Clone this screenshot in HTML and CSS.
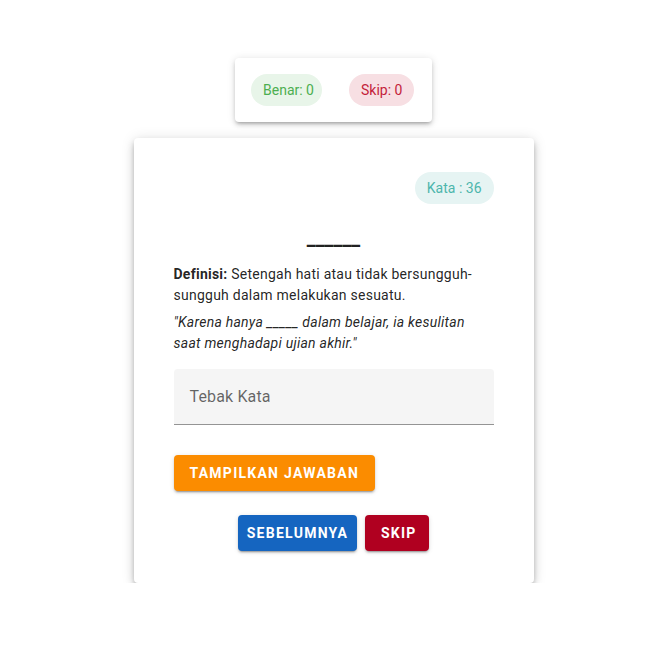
FILE: index.html
```html
<!DOCTYPE html>
<html>
<head>
<meta charset="utf-8">
<link rel="stylesheet" href="styles.css">
</head>
<body>
<div class="page">
  <div class="score-card">
    <span class="chip chip-green">Benar: 0</span>
    <span class="chip chip-red">Skip: 0</span>
  </div>
  <div class="main-card">
    <div class="chip-row">
      <span class="chip chip-teal">Kata : 36</span>
    </div>
    <div class="word">______</div>
    <p class="def"><b>Definisi:</b> Setengah hati atau tidak bersungguh-sungguh dalam melakukan sesuatu.</p>
    <p class="example">"Karena hanya _____ dalam belajar, ia kesulitan saat menghadapi ujian akhir."</p>
    <div class="field"><span class="label">Tebak Kata</span></div>
    <div class="reveal-row">
      <button class="btn btn-orange">Tampilkan Jawaban</button>
    </div>
    <div class="nav-row">
      <button class="btn btn-blue">Sebelumnya</button>
      <button class="btn btn-red">Skip</button>
    </div>
  </div>
</div>
</body>
</html>
```
FILE: styles.css
```css
* { box-sizing: border-box; }
body {
  margin: 0;
  background: #fff;
  font-family: Roboto, "Noto Sans", sans-serif;
  color: rgba(0,0,0,0.87);
}
.page {
  display: flex;
  flex-direction: column;
  align-items: center;
  padding-top: 58px;
  padding-left: 4px;
  gap: 16px;
}
.score-card {
  width: 197px;
  height: 64px;
  background: #fff;
  border-radius: 4px;
  box-shadow: 0 3px 3px -2px rgba(0,0,0,.2), 0 3px 4px 0 rgba(0,0,0,.14), 0 1px 8px 0 rgba(0,0,0,.12);
  display: flex;
  align-items: center;
  padding-left: 16px;
  gap: 27px;
}
.chip {
  display: inline-flex;
  align-items: center;
  height: 32px;
  padding: 0 12px;
  border-radius: 16px;
  font-size: 14px;
}
.chip-green { background: #e8f5e9; color: #4caf50; padding: 0 8px 0 12px; }
.chip-red { background: #f7dfe3; color: #c41e3a; }
.chip-teal { background: #e6f4f3; color: #4db6ac; }
.main-card {
  width: 400px;
  background: #fff;
  border-radius: 4px;
  box-shadow: 0 3px 5px -1px rgba(0,0,0,.2), 0 5px 8px 0 rgba(0,0,0,.14), 0 1px 14px 0 rgba(0,0,0,.12);
  padding: 34px 40px 32px;
}
.chip-row {
  display: flex;
  justify-content: flex-end;
}
.word {
  text-align: center;
  font-size: 20px;
  font-weight: 700;
  line-height: 28px;
  margin-top: 20px;
  color: #222;
}
.def, .example {
  font-size: 14px;
  line-height: 21px;
  letter-spacing: 0.25px;
  margin: 0;
  color: rgba(0,0,0,0.87);
}
.def { margin-top: 12px; }
.example { margin-top: 6px; font-style: italic; }
.field {
  margin-top: 15px;
  height: 56px;
  background: #f5f5f5;
  border-radius: 4px 4px 0 0;
  border-bottom: 1px solid #949494;
  display: flex;
  align-items: center;
  padding-left: 16px;
}
.label {
  font-size: 16px;
  letter-spacing: 0.15px;
  color: rgba(0,0,0,0.6);
}
.reveal-row { margin-top: 30px; display: flex; }
.nav-row {
  margin-top: 24px;
  display: flex;
  justify-content: center;
  gap: 8px;
}
.btn {
  height: 36px;
  border: none;
  border-radius: 4px;
  padding: 0 16px;
  white-space: nowrap;
  font-family: Roboto, sans-serif;
  font-size: 14px;
  font-weight: 700;
  letter-spacing: 1.25px;
  text-transform: uppercase;
  color: #fff;
  box-shadow: 0 3px 1px -2px rgba(0,0,0,.2), 0 2px 2px 0 rgba(0,0,0,.14), 0 1px 5px 0 rgba(0,0,0,.12);
}
.btn-orange { background: #fb8c00; }
.btn-blue { background: #1565c0; width: 119px; padding: 0 8px; }
.btn-red { background: #b00020; width: 64px; }
```
